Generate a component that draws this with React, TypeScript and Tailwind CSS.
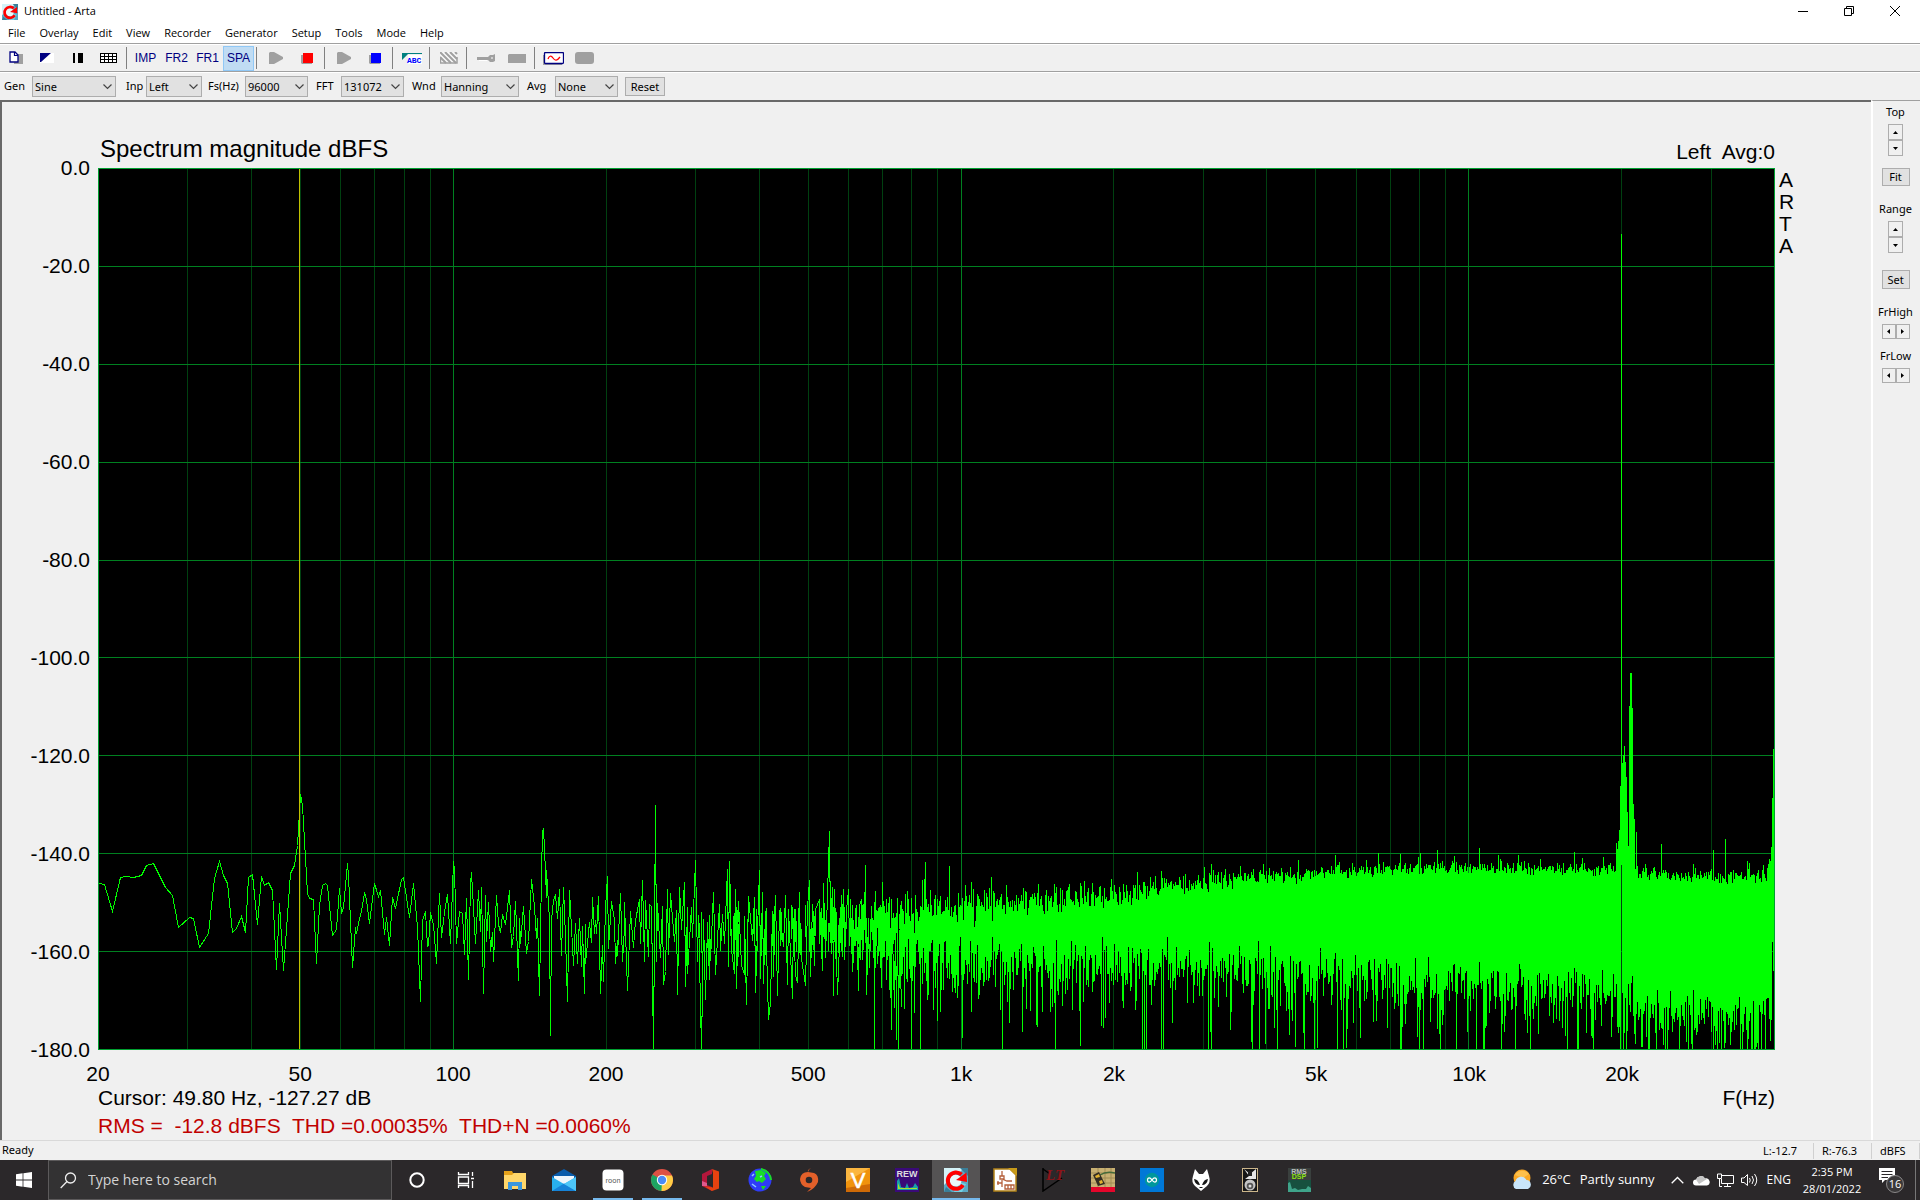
import type { ReactNode } from "react";

const menus = ["File", "Overlay", "Edit", "View", "Recorder", "Generator", "Setup", "Tools", "Mode", "Help"];

const dbTicks = ["0.0", "-20.0", "-40.0", "-60.0", "-80.0", "-100.0", "-120.0", "-140.0", "-160.0", "-180.0"];

const freqTicks = [
    { hz: 20, label: "20" },
    { hz: 50, label: "50" },
    { hz: 100, label: "100" },
    { hz: 200, label: "200" },
    { hz: 500, label: "500" },
    { hz: 1000, label: "1k" },
    { hz: 2000, label: "2k" },
    { hz: 5000, label: "5k" },
    { hz: 10000, label: "10k" },
    { hz: 20000, label: "20k" },
];

// plot units
const PLOT_W = 1677;
const PLOT_H = 882;
const F_MIN = 20;
const F_MAX = 40000;
const BASE_Y = 612;

function freqRatio(hz: number) {
    return Math.log10(hz / F_MIN) / Math.log10(F_MAX / F_MIN);
}

function freqX(hz: number) {
    return Math.round(freqRatio(hz) * (PLOT_W - 1)) + 0.5;
}

// low frequency bins, x,y pairs measured from BASE_Y
const lowBins =
    "0,103 6,104 14,131 22,97 28,96 35,97 43,95 48,85 55,83 67,107 74,115 80,147 91,137 95,138 101,167 110,153 116,98 121,81 125,95 129,103 134,152 138,148 143,136 147,152 150,97 154,94 159,144 163,96 166,105 170,102 174,110 178,189 181,123 185,190 192,93 196,85 199,65 202,14 204,25 206,60 209,113 211,118 215,119 218,183 221,125 224,105 227,103 229,105 234,155 238,149 241,108 243,133 245,127 249,83 250,95 254,187 257,147 258,153 261,138 263,131 266,112 268,119 271,143 276,103 280,116 282,110 286,154 288,137 291,165 294,117 297,128 303,99 305,97 311,137 315,103 319,147 322,221 324,140 327,131 329,166 330,165 332,132 335,144 338,183 341,113 343,157 346,132 349,114 352,163 355,81 356,89 358,163 361,131 364,133 366,174 368,118 370,199 372,103 373,92 377,163 380,110 382,151 383,107 385,213 387,115 388,161 390,122 392,171 394,152 395,181 398,115 400,144 402,152 404,134 407,144 411,110 413,167 415,156 417,121 420,200 421,138 422,163 425,126 428,173 430,161 433,99 436,126 438,158 439,138 441,215 443,93 444,52 445,48 446,68 448,117 448,90 451,140 452,255 453,140 455,120 457,114 459,138 461,109 463,175 465,107 467,157 469,221 471,110 475,185 477,143 479,183 481,138 483,186 484,146 486,213 487,144 487,183 491,142 493,162 494,117 496,153 497,140 498,153 500,116 502,213 504,165 505,201 507,127 509,96 510,168 513,121 516,140 517,183 519,160 519,175 522,113 524,181 526,147 526,122 529,210 532,131 535,167 537,140 541,119 542,163 544,100 546,181 547,120 550,176 551,124 553,126 555,269 557,25 558,181 559,123 562,177 564,126 565,204 567,191 569,109 570,174 572,113 576,161 578,130 579,214 581,107 583,149 586,102 587,206 589,127 589,193 593,127 594,157 597,80 599,181 600,135 603,269 605,139 607,219 609,144 611,199 611,135 612,180 615,112 617,194 621,124 622,170 624,134 626,163 629,89 630,186 631,81 633,170 636,193 637,109 638,208 640,121 643,185 646,194 646,136 648,224 650,116 654,160 656,117 657,212 661,90 662,198 664,112 665,203 667,131 670,239 672,222 674,131 675,196 677,115 679,215 681,130 685,166 687,115 689,204 690,129 694,218 695,138 697,195 699,202 701,112 702,171 707,205 709,127 711,100 712,196 714,124 716,185 717,129 721,119 724,190 725,103 727,177 731,51 732,150 734,107 735,215 736,109 739,214 743,115 743,170 745,109 746,179 748,130 750,109 751,165 752,119 754,191 757,140 758,125 760,210 761,125 763,119 764,179 766,140 767,85 768,214 770,138 771,187 773,126 775,170 776,122 776,269 777,111 779,183 781,127 783,207 784,102 786,175 788,119 788,199 790,123 791,209 791,117 793,249 793,119 796,227 797,137 798,259 799,118 800,269 801,150 803,227";

const highPeaks: Record<number, number> = {
    824: 100, 827: 82, 826: 99, 851: 86, 867: 105, 873: 102, 893: 97, 940: 104, 956: 104, 1039: 92, 1052: 97,
    1087: 94, 1106: 87, 1113: 84, 1115: 90, 1142: 86, 1200: 80, 1237: 75, 1280: 73, 1302: 74, 1339: 70, 1322: 73,
    1356: 76, 1381: 68, 1420: 75, 1476: 72, 1484: 78, 1505: 77, 1518: 63, 1519: 69, 1520: 61, 1521: 50, 1522: 6,
    1523: -546, 1524: -17, 1525: -25, 1526: -34, 1527: -18, 1528: -3, 1529: 32, 1530: 66, 1531: -74, 1532: -107,
    1533: -107, 1534: -72, 1535: 24, 1536: 39, 1538: 52, 1563: 64, 1595: 84, 1615: 70, 1627: 59, 1649: 81,
    1651: 83, 1665: 85, 1669: 88, 1670: 84, 1671: 79, 1672: 81, 1673: 67, 1674: 18, 1675: -31,
};

// smoothed envelope of the noise floor: x, upper edge, lower edge
const envelope = [
    [803, 130, 172],
    [862, 128, 172],
    [950, 119, 172],
    [1020, 112, 174],
    [1100, 103, 176],
    [1180, 95, 178],
    [1232, 92, 184],
    [1330, 88, 192],
    [1420, 88, 198],
    [1500, 90, 202],
    [1560, 94, 218],
    [1620, 97, 228],
    [1677, 97, 222],
];

function envelopeAt(x: number) {
    let i = 0;
    while (i < envelope.length - 2 && envelope[i + 1][0] < x) i++;
    const [x0, t0, b0] = envelope[i];
    const [x1, t1, b1] = envelope[i + 1];
    const k = (x - x0) / (x1 - x0);
    return [t0 + (t1 - t0) * k, b0 + (b1 - b0) * k];
}

function buildNoise() {
    let seed = 20220128;
    const rand = () => {
        seed = (seed * 1664525 + 1013904223) % 4294967296;
        return seed / 4294967296;
    };
    let d = "";
    // bins start to share columns here
    for (let x = 600; x < 803; x++) {
        if (rand() < (x - 560) / 260) {
            d += `M${x + 0.5} ${Math.round(124 + rand() * 26)}V${Math.round(148 + rand() * 32)}`;
        }
    }
    for (let x = 803; x < 1676; x++) {
        const [top, bottom] = envelopeAt(x);
        const spread = x < 900 ? 24 : x < 1050 ? 17 : x < 1200 ? 12 : 8;
        let y0 = top + (rand() + rand() - 1) * spread - (rand() > 0.9 ? rand() * 8 : 0);
        let y1 = bottom + (rand() - 0.5) * 38 - Math.log(1 - rand()) * 24;
        if (x in highPeaks) y0 = highPeaks[x];
        if (x === 1523) y1 = 85;
        if (x === 1674) y1 = 162;
        if (x === 1675) y1 = 191;
        y1 = Math.min(y1, 269);
        d += `M${x + 0.5} ${Math.round(y0)}V${Math.round(y1)}`;
    }
    return d;
}

const noisePath = buildNoise();

const gridFreqs: number[] = [];
for (const decade of [10, 100, 1000, 10000]) {
    for (let n = 1; n < 10; n++) {
        const hz = n * decade;
        if (hz > F_MIN && hz < F_MAX) gridFreqs.push(hz);
    }
}

function Plot() {
    return (
        <svg
            viewBox={`0 0 ${PLOT_W} ${PLOT_H}`}
            preserveAspectRatio="none"
            shapeRendering="crispEdges"
            className="block h-full w-full bg-black"
            role="img"
            aria-label="Spectrum magnitude"
        >
            {gridFreqs
                .filter((hz) => ![100, 1000, 10000].includes(hz))
                .map((hz) => (
                    <line key={hz} x1={freqX(hz)} x2={freqX(hz)} y1={0} y2={PLOT_H} stroke="#004010" />
                ))}
            {[100, 1000, 10000].map((hz) => (
                <line key={hz} x1={freqX(hz)} x2={freqX(hz)} y1={0} y2={PLOT_H} stroke="#008020" />
            ))}
            {dbTicks.map((t, i) => {
                const y = Math.round((i * (PLOT_H - 1)) / 9) + 0.5;
                return <line key={t} x1={0} x2={PLOT_W} y1={y} y2={y} stroke="#008020" />;
            })}
            <g transform={`translate(0 ${BASE_Y})`} fill="none" stroke="#00ff00">
                <polyline points={lowBins} transform="translate(0.5 0.5)" />
                <path d={noisePath} />
            </g>
            <line x1={201.5} x2={201.5} y1={0} y2={PLOT_H} stroke="#c0c000" />
            <rect x={0.5} y={0.5} width={PLOT_W - 1} height={PLOT_H - 1} fill="none" stroke="#00a030" />
        </svg>
    );
}

function Chart() {
    return (
        <div className="grid min-h-0 min-w-0 flex-1 grid-cols-[96px_minmax(0,1fr)_96px] grid-rows-[66px_minmax(0,1fr)_auto] border-l-2 border-t-2 border-[#696969] bg-[#f0f0f0] font-['Liberation_Sans',Arial,sans-serif] text-[21px] leading-6 text-black">
            <div />
            <div className="flex items-end justify-between pb-1">
                <h1 className="pl-0.5 text-2xl leading-[30px]">Spectrum magnitude dBFS</h1>
                <span className="whitespace-pre">Left  Avg:0</span>
            </div>
            <div />

            <div className="-my-3 flex flex-col justify-between pr-2 text-right">
                {dbTicks.map((t) => (
                    <span key={t}>{t}</span>
                ))}
            </div>
            <Plot />
            <div className="flex flex-col pt-px pl-1 leading-[22px]">
                <span>A</span>
                <span>R</span>
                <span>T</span>
                <span>A</span>
            </div>

            <div />
            <div className="pt-3">
                <svg className="block h-6 w-full overflow-visible" aria-label="Frequency axis">
                    {freqTicks.map((t) => (
                        <text key={t.hz} x={`${freqRatio(t.hz) * 100}%`} y={19} textAnchor="middle">
                            {t.label}
                        </text>
                    ))}
                </svg>
                <div className="flex justify-between">
                    <span>Cursor: 49.80 Hz, -127.27 dB</span>
                    <span>F(Hz)</span>
                </div>
                <p className="pt-1 pb-0.5 whitespace-pre text-[#c00000]">
                    RMS =  -12.8 dBFS  THD =0.00035%  THD+N =0.0060%
                </p>
            </div>
            <div />
        </div>
    );
}

function ToolButton({ label, active, children }: { label: string; active?: boolean; children: ReactNode }) {
    return (
        <button
            aria-label={label}
            className={
                active
                    ? "flex h-[25px] w-[31px] items-center justify-center border border-[#90c8f6] bg-[#c0dcf3]"
                    : "flex h-[25px] w-[31px] items-center justify-center"
            }
        >
            {children}
        </button>
    );
}

function Sep() {
    return <div className="mr-[3px] ml-0.5 h-[22px] w-px bg-[#808080]" />;
}

function Toolbar() {
    return (
        <div className="flex h-7 items-center border-t border-b border-t-white border-b-[#a0a0a0] bg-[#f0f0f0] font-['Liberation_Sans',Arial,sans-serif] text-xs text-[#000080]">
            <ToolButton label="Copy">
                <svg width="14" height="14" viewBox="0 0 14 14">
                    <path d="M5 3H14V13H5z" fill="#a0a0a0" />
                    <path d="M1 1H6L9 4V11H1z" fill="#fff" stroke="#000080" strokeWidth="1.3" />
                    <path d="M5.500 1V4.500H9" fill="none" stroke="#000080" strokeWidth="1.200" />
                </svg>
            </ToolButton>
            <ToolButton label="Black and white">
                <svg width="14" height="10" viewBox="0 0 14 10">
                    <path d="M0 0H14V10H0z" fill="#fff" />
                    <path d="M0 0H11L1 9H0z" fill="#000080" />
                </svg>
            </ToolButton>
            <ToolButton label="Line width">
                <svg width="10" height="10" viewBox="0 0 10 10">
                    <path d="M0 0H2V10H0zM5 0H10V10H5z" fill="#000" />
                </svg>
            </ToolButton>
            <ToolButton label="Grid">
                <svg width="17" height="10" viewBox="0 0 17 10" shapeRendering="crispEdges">
                    <path
                        d="M.5 .5H16.500V9.500H.5zM0 3.500H17M0 6.500H17M4.500 0V10M8.500 0V10M12.500 0V10"
                        fill="#fff"
                        stroke="#000"
                    />
                </svg>
            </ToolButton>
            <Sep />
            <ToolButton label="Impulse response">IMP</ToolButton>
            <ToolButton label="Frequency response 2">FR2</ToolButton>
            <ToolButton label="Frequency response 1">FR1</ToolButton>
            <ToolButton label="Spectrum" active>
                SPA
            </ToolButton>
            <Sep />
            <ToolButton label="Start">
                <svg width="14" height="12" viewBox="0 0 14 12">
                    <path d="M0 1L1 0H5L14 5V7L5 12H0z" fill="#a0a0a0" />
                </svg>
            </ToolButton>
            <ToolButton label="Stop">
                <svg width="12" height="11" viewBox="0 0 12 11">
                    <path d="M0 2H11V11H1L0 10z" fill="#a0a0a0" />
                    <path d="M2 0H12V10H2z" fill="#ff0000" />
                </svg>
            </ToolButton>
            <Sep />
            <ToolButton label="Generator start">
                <svg width="14" height="12" viewBox="0 0 14 12">
                    <path d="M0 1L1 0H5L14 5V7L5 12H0z" fill="#a0a0a0" />
                </svg>
            </ToolButton>
            <ToolButton label="Generator stop">
                <svg width="12" height="11" viewBox="0 0 12 11">
                    <path d="M0 2H11V11H1L0 10z" fill="#a0a0a0" />
                    <path d="M2 0H12V10H2z" fill="#0000ff" />
                </svg>
            </ToolButton>
            <Sep />
            <ToolButton label="Weighting">
                <svg width="20" height="12" viewBox="0 0 20 12">
                    <path d="M0 1H20V2H6L0 8z" fill="#008080" />
                    <path d="M6 3H20V12H6z" fill="#fff" />
                    <text x="5" y="11" fontSize="8" fill="#0000ff" className="font-['Liberation_Mono',monospace] font-bold">
                        ABC
                    </text>
                </svg>
            </ToolButton>
            <Sep />
            <ToolButton label="Overlay">
                <svg width="18" height="12" viewBox="0 0 18 12">
                    <path d="M0 0H17V11H0z" fill="#f8f8f8" />
                    <path d="M0 0L11 11M5 0L16 11M10 0L17 7M0 5L6 11M15 0L17 2" stroke="#a0a0a0" strokeWidth="2" />
                    <path d="M.5 5V11H17V5" fill="none" stroke="#a0a0a0" strokeWidth="1.500" />
                </svg>
            </ToolButton>
            <Sep />
            <ToolButton label="Calibrate">
                <svg width="18" height="9" viewBox="0 0 18 9">
                    <path d="M0 3H11L13 1H16L18 0V7L16 8H13L11 6H0z" fill="#a0a0a0" />
                    <path d="M2 6.500H10M14 4H16" stroke="#fff" />
                </svg>
            </ToolButton>
            <ToolButton label="Level">
                <svg width="18" height="9" viewBox="0 0 18 9">
                    <path d="M1 0H18V9H0V1z" fill="#a0a0a0" />
                </svg>
            </ToolButton>
            <Sep />
            <ToolButton label="Signal generator">
                <svg width="21" height="13" viewBox="0 0 21 13">
                    <path d="M1 3V12H19" fill="none" stroke="#a0a0a0" strokeWidth="2" />
                    <rect x="1.500" y=".5" width="19" height="11" rx="1" fill="#fff" stroke="#000080" strokeWidth="1.300" />
                    <path d="M5 7C6 4 8 3 10 6S14 9 17 5" fill="none" stroke="#ff0000" strokeWidth="1.300" />
                </svg>
            </ToolButton>
            <ToolButton label="Record">
                <svg width="19" height="12" viewBox="0 0 19 12">
                    <rect width="19" height="12" rx="3" fill="#a0a0a0" />
                </svg>
            </ToolButton>
        </div>
    );
}

function Combo({ id, label, value, labelClass, boxClass }: { id: string; label: string; value: string; labelClass: string; boxClass: string }) {
    return (
        <div className="flex items-center">
            <label htmlFor={id} className={labelClass}>
                {label}
            </label>
            <div className={boxClass}>
                <select id={id} className="h-full w-full appearance-none border border-[#adadad] bg-[#e1e1e1] pl-0.5 leading-4 text-black">
                    <option>{value}</option>
                </select>
                <svg width="9" height="6" viewBox="0 0 9 6" className="pointer-events-none absolute top-2 right-1">
                    <path d="M.5 .5L4.500 4.500L8.500 .5" fill="none" stroke="#444" strokeWidth="1.200" />
                </svg>
            </div>
        </div>
    );
}

function SettingsBar() {
    return (
        <div className="flex h-7 items-center border-t border-t-white bg-[#f0f0f0] pl-1 font-['Noto_Sans',sans-serif] text-[11px] text-black">
            <Combo id="gen" label="Gen" value="Sine" labelClass="w-7" boxClass="relative h-[21px] w-[84px]" />
            <Combo id="inp" label="Inp" value="Left" labelClass="ml-[10px] w-5" boxClass="relative h-[21px] w-14" />
            <Combo id="fs" label="Fs(Hz)" value="96000" labelClass="ml-1.5 w-[37px]" boxClass="relative h-[21px] w-[63px]" />
            <Combo id="fft" label="FFT" value="131072" labelClass="ml-2 w-[25px]" boxClass="relative h-[21px] w-[63px]" />
            <Combo id="wnd" label="Wnd" value="Hanning" labelClass="ml-2 w-[29px]" boxClass="relative h-[21px] w-[78px]" />
            <Combo id="avg" label="Avg" value="None" labelClass="ml-2 w-7" boxClass="relative h-[21px] w-[63px]" />
            <button className="ml-[7px] h-[19px] w-10 border border-[#adadad] bg-[#e1e1e1] leading-4">Reset</button>
        </div>
    );
}

function VSpin({ name }: { name: string }) {
    return (
        <div className="flex w-[15px] flex-col">
            <button aria-label={`${name} up`} className="flex h-4 items-center justify-center border border-[#adadad] bg-[#f0f0f0]">
                <svg width="5" height="3" viewBox="0 0 5 3">
                    <path d="M0 3L2.500 0L5 3z" />
                </svg>
            </button>
            <button aria-label={`${name} down`} className="flex h-4 items-center justify-center border border-[#adadad] bg-[#f0f0f0]">
                <svg width="5" height="3" viewBox="0 0 5 3">
                    <path d="M0 0L2.500 3L5 0z" />
                </svg>
            </button>
        </div>
    );
}

function HSpin({ name }: { name: string }) {
    return (
        <div className="flex h-[15px]">
            <button aria-label={`${name} left`} className="flex w-3.5 items-center justify-center border border-[#adadad] bg-[#f0f0f0]">
                <svg width="3" height="5" viewBox="0 0 3 5">
                    <path d="M3 0L0 2.500L3 5z" />
                </svg>
            </button>
            <button aria-label={`${name} right`} className="flex w-3.5 items-center justify-center border border-[#adadad] bg-[#f0f0f0]">
                <svg width="3" height="5" viewBox="0 0 3 5">
                    <path d="M0 0L3 2.500L0 5z" />
                </svg>
            </button>
        </div>
    );
}

function SidePanel() {
    return (
        <aside className="flex w-[49px] shrink-0 flex-col items-center border-t border-l-2 border-t-[#a0a0a0] border-l-white bg-[#f0f0f0] pt-1 pr-0.5 font-['Noto_Sans',sans-serif] text-[11px] leading-[14px] text-black">
            <span>Top</span>
            <div className="mt-[5px]">
                <VSpin name="Top" />
            </div>
            <button className="mt-3 h-[18px] w-7 border border-[#adadad] bg-[#e1e1e1]">Fit</button>
            <span className="mt-4">Range</span>
            <div className="mt-[5px]">
                <VSpin name="Range" />
            </div>
            <button className="mt-[17px] h-[19px] w-7 border border-[#adadad] bg-[#e1e1e1] leading-4">Set</button>
            <span className="mt-4">FrHigh</span>
            <div className="mt-[5px]">
                <HSpin name="FrHigh" />
            </div>
            <span className="mt-[10px]">FrLow</span>
            <div className="mt-[5px]">
                <HSpin name="FrLow" />
            </div>
        </aside>
    );
}

function ArtaIcon({ size }: { size: number }) {
    return (
        <svg width={size} height={size} viewBox="0 0 24 24">
            <path d="M0 0H24V24H0z" fill="#5ba9c4" />
            <path d="M0 0H20L16 4L6 6L3 14L0 17z" fill="#d4f2f8" />
            <path d="M16 0H24V8zM2 19L8 24H0z" fill="#3a7e98" />
            <path d="M14 14L22 16L18 24H10z" fill="#74d2e6" />
            <circle cx="11.500" cy="12.500" r="6" fill="#e9f9fb" />
            <path d="M19 17A8.200 8.200 0 1 1 17.500 6.500" fill="none" stroke="#ff0000" strokeWidth="4" />
            <path d="M12 12L22.500 4.500L23 14z" fill="#ff0000" />
        </svg>
    );
}

const taskIcons: { name: string; state?: "open" | "active"; icon: ReactNode }[] = [
    {
        name: "Cortana",
        icon: <circle cx="12" cy="12" r="6.700" fill="none" stroke="#fff" strokeWidth="2" />,
    },
    {
        name: "Task view",
        icon: (
            <path
                d="M4.500 4V6.500H14.500V4M4.500 20V17.500H14.500V20M4.500 9H14.500V15.500H4.500zM18.500 4V8M18.500 13V20M17 10.500H20"
                fill="none"
                stroke="#fff"
                strokeWidth="1.300"
            />
        ),
    },
    {
        name: "File Explorer",
        icon: (
            <>
                <path d="M1 3H9L10 5H22V21H1z" fill="#e5a21a" />
                <path d="M1 7H9L11 5H23V21H1z" fill="#ffd76a" />
                <path d="M5 14H19V22H15V18H9V22H5z" fill="#3a96dd" />
            </>
        ),
    },
    {
        name: "Mail",
        icon: (
            <>
                <path d="M0 8L12 1L24 8V14H0z" fill="#0a5cab" />
                <path d="M2 8H22V16H2z" fill="#eef5fb" />
                <path d="M0 9L12 16L24 9V23H0z" fill="#28b0ee" />
                <path d="M0 23L12 15.500L24 23z" fill="#1683d8" />
                <path d="M24 9V23L12 16z" fill="#4dc6f8" />
            </>
        ),
    },
    {
        name: "Roon",
        state: "open",
        icon: (
            <>
                <rect x="1.500" y="1.500" width="21" height="21" rx="4" fill="#fff" />
                <text x="12" y="14.500" textAnchor="middle" fontSize="7" fill="#555" className="font-['Inter',sans-serif]">
                    roon
                </text>
            </>
        ),
    },
    {
        name: "Chrome",
        state: "open",
        icon: (
            <>
                <circle cx="12" cy="12" r="11" fill="#dd5144" />
                <path d="M12 12L2.500 6.500A11 11 0 0 0 11.500 23L17 14z" fill="#1da462" />
                <path d="M12 12L11.500 23A11 11 0 0 0 22 7.500H12z" fill="#ffcd46" />
                <circle cx="12" cy="12" r="5.200" fill="#fff" />
                <circle cx="12" cy="12" r="4.200" fill="#4c8bf5" />
            </>
        ),
    },
    {
        name: "Office",
        icon: (
            <>
                <path d="M3 6L13 1V6L8 8V17L13 19V23L3 18z" fill="#b5173c" />
                <path d="M13 1L20 3.500V20.500L13 23L5 18L14 19.500V5z" fill="#e74210" />
                <path d="M3 13L8 15V18L3 18z" fill="#e05a8e" />
            </>
        ),
    },
    {
        name: "Globe",
        icon: (
            <>
                <circle cx="12" cy="12" r="11.500" fill="#2f3cf6" />
                <path d="M7 3L13 2L18 5L16 8L18 11L14 15L11 13L9 14L6 11L8 8z" fill="#18dd25" />
                <path d="M13 18L18 18L15 22z" fill="#18dd25" />
                <path d="M13 1Q22 3 23 12" fill="none" stroke="#18dd25" strokeWidth="2" />
                <path d="M4 8L6 6M12 9L14 8M4 16L8 19" stroke="#8ec8ff" strokeWidth="1.500" />
            </>
        ),
    },
    {
        name: "Origin",
        icon: (
            <>
                <path d="M14 0Q10 2 11 4Q4 4 3 11Q3 16 8 19L14 20Q12 22 10 24Q18 21 21 14Q22 7 17 5L11 4Q12 1 14 0z" fill="#e3602a" />
                <circle cx="12" cy="12" r="3.300" fill="#2b282a" />
            </>
        ),
    },
    {
        name: "Voltage",
        icon: (
            <>
                <path d="M0 0H24V24H0z" fill="#f0930d" />
                <path d="M0 0H24L0 14z" fill="#fbb640" />
                <path d="M0 20L24 16V24H0z" fill="#cf6a06" />
                <text x="12" y="20" textAnchor="middle" fontSize="22" fill="#fff" stroke="#fff" strokeWidth=".6" className="font-['Liberation_Sans',sans-serif]">
                    V
                </text>
            </>
        ),
    },
    {
        name: "REW",
        icon: (
            <>
                <path d="M0 0H24V24H0z" fill="#3a0a78" />
                <path d="M2 22V13L4 10L6 19L10 20L12 15L14 20L18 19L20 15L23 19V22z" fill="#16a1a8" />
                <path d="M3 21V15L5 20H22V21z" fill="#a8e02c" />
                <text x="12" y="9" textAnchor="middle" fontSize="9" fill="#ddd" className="font-['Liberation_Sans',sans-serif] font-bold">
                    REW
                </text>
            </>
        ),
    },
    { name: "Arta", state: "active", icon: null },
    {
        name: "Schematic",
        icon: (
            <>
                <path d="M1 1H17L23 7V23H1z" fill="#fff" stroke="#b38319" strokeWidth="1.500" />
                <path d="M15 0H24V8z" fill="#c79a1a" />
                <path d="M9 3V8M9 12V19M4 15H9M9 11L14 13H19M7 8H11V11H7zM12 17H21V21H12zM15 17V21M18 17V21M5 13V17" fill="none" stroke="#b5603c" strokeWidth="1.300" />
            </>
        ),
    },
    {
        name: "LTspice",
        icon: (
            <>
                <path d="M1 0V23L20 10" fill="none" stroke="#000" strokeWidth="1.500" />
                <path d="M1 1L8 6" stroke="#000" strokeWidth="1.500" />
                <text x="4" y="12" fontSize="15" fill="#8e1217" className="font-['Liberation_Serif',serif] font-bold italic">
                    LT
                </text>
            </>
        ),
    },
    {
        name: "Multimeter",
        icon: (
            <>
                <path d="M0 0H24V19H0z" fill="#c8b072" />
                <path d="M0 5H24M0 10H24M0 15H24M7 0V19M14 0V19M20 0V19" stroke="#a08c54" />
                <path d="M9 7Q15 3 24 5" fill="none" stroke="#456b3a" strokeWidth="1.500" />
                <path d="M2 7L8 4L14 16L7 18z" fill="#332d22" />
                <path d="M4 8L8 6L9 9L5 10zM8 13L11 12L12 15L9 16z" fill="#e3b331" />
                <path d="M0 19H24V24H0z" fill="#e5062b" />
            </>
        ),
    },
    {
        name: "Arduino",
        icon: (
            <>
                <path d="M0 0H24V24H0z" fill="#0078d7" />
                <circle cx="12" cy="12" r="7.200" fill="#00979c" />
                <path d="M12 12C10 9 7.500 9.500 7.500 12S10 15 12 12S16.500 9.500 16.500 12S14 15 12 12z" fill="none" stroke="#fff" strokeWidth="1.300" />
            </>
        ),
    },
    {
        name: "foobar2000",
        icon: (
            <>
                <path d="M6 1L10 6H14L18 1L20 8Q22 14 18 18L12 23L6 18Q2 14 4 8z" fill="#fff" />
                <path d="M5 11Q9 11 11 17Q6 17 5 11zM19 11Q15 11 13 17Q18 17 19 11z" fill="#161616" />
                <path d="M10.500 19.500H13.500" stroke="#161616" />
            </>
        ),
    },
    {
        name: "Speaker",
        icon: (
            <>
                <path d="M4 0H20V24H4z" fill="#cbb58a" />
                <path d="M5 1H19V23H5z" fill="#161616" />
                <path d="M6 1L12 6L18 1V11H7L11 8z" fill="#e6e6e6" />
                <path d="M10 3H14V8H10z" fill="#222" />
                <circle cx="12" cy="17" r="5.500" fill="#c4c4c4" />
                <circle cx="12" cy="18" r="3.300" fill="#555" />
                <circle cx="12" cy="18" r="1.500" fill="#ddd" />
            </>
        ),
    },
    {
        name: "RMS DSP",
        icon: (
            <>
                <path d="M1 0H24V24H1z" fill="#3a403e" />
                <path d="M1 12H24V24H1z" fill="#17503f" />
                <path d="M1 24V15L3 14L5 21L8 20L11 22L15 21L19 21L21 18L24 20V24z" fill="#3fa48a" />
                <text x="12" y="6" textAnchor="middle" fontSize="7" fill="#b9bebd" className="font-['Liberation_Sans',sans-serif] font-bold">
                    RMS
                </text>
                <text x="12" y="11" textAnchor="middle" fontSize="7" fill="#8be614" className="font-['Liberation_Sans',sans-serif] font-bold">
                    DSP
                </text>
            </>
        ),
    },
];

function Taskbar() {
    return (
        <footer className="flex h-10 shrink-0 items-stretch bg-[#2b282a] font-['Open_Sans',sans-serif] text-white">
            <button aria-label="Start" className="flex w-12 items-center justify-center">
                <svg width="16" height="16" viewBox="0 0 16 16">
                    <path d="M0 2.200L6.600 1.300V7.600H0zM7.400 1.200L16 0V7.600H7.400zM0 8.400H6.600V14.700L0 13.800zM7.400 8.400H16V16L7.400 14.800z" fill="#fff" />
                </svg>
            </button>
            <label className="flex w-[344px] items-center gap-[11px] border border-[#5c5a5b] bg-[#333233] pl-[11px]">
                <svg width="17" height="17" viewBox="0 0 17 17">
                    <circle cx="10.500" cy="6" r="5" fill="none" stroke="#eee" strokeWidth="1.300" />
                    <path d="M7 9.500L.7 16" stroke="#eee" strokeWidth="1.300" />
                </svg>
                <input
                    type="text"
                    placeholder="Type here to search"
                    className="min-w-0 flex-1 bg-transparent text-sm outline-none placeholder:text-[#d4d4d4]"
                />
            </label>
            <div className="ml-px flex gap-px">
                {taskIcons.map((t) => (
                    <button
                        key={t.name}
                        aria-label={t.name}
                        className={
                            t.state === "active"
                                ? "flex w-12 flex-col items-center justify-between bg-[#555354] pt-2"
                                : "flex w-12 flex-col items-center justify-between pt-2"
                        }
                    >
                        {t.icon ? (
                            <svg width="24" height="24" viewBox="0 0 24 24">
                                {t.icon}
                            </svg>
                        ) : (
                            <ArtaIcon size={24} />
                        )}
                        {t.state === "active" && <span className="h-0.5 w-full bg-[#76b9ed]" />}
                        {t.state === "open" && <span className="h-0.5 w-10 bg-[#76b9ed]" />}
                    </button>
                ))}
            </div>
            <div className="ml-auto flex items-center">
                <button className="flex items-center gap-[9px] text-[13px]">
                    <svg width="22" height="22" viewBox="0 0 22 22">
                        <circle cx="11" cy="9" r="8.500" fill="#f9a825" />
                        <path d="M4 6A8.500 8.500 0 0 1 18 5L12 9z" fill="#fdc04b" />
                        <path d="M5 20A4.500 4.500 0 0 1 4.500 12A6 6 0 0 1 15.500 11A4.700 4.700 0 0 1 17 20z" fill="#c9e6fa" />
                    </svg>
                    <span>26°C</span>
                    <span>Partly sunny</span>
                </button>
                <button aria-label="Show hidden icons" className="ml-4">
                    <svg width="13" height="8" viewBox="0 0 13 8">
                        <path d="M.7 7.300L6.500 1.500L12.300 7.300" fill="none" stroke="#fff" strokeWidth="1.300" />
                    </svg>
                </button>
                <svg width="17" height="11" viewBox="0 0 17 11" className="ml-[9px]">
                    <path d="M3 10.500A3 3 0 0 1 3 4.500A5 5 0 0 1 12 3.500A3.600 3.600 0 0 1 14 10.500z" fill="#fff" />
                    <path d="M3 4.500A5 5 0 0 1 12 3.500L14 4L6 9z" fill="#c4c4c4" />
                </svg>
                <svg width="17" height="15" viewBox="0 0 17 15" className="ml-[7px]">
                    <path d="M5 2.500H16.500V10.500H4.500V6M10.500 10.500V13.500M7 13.500H14M.5 1H4.500V5.500H.5zM2.500 6V13.500H5" fill="none" stroke="#fff" />
                </svg>
                <svg width="17" height="14" viewBox="0 0 17 14" className="ml-[7px]">
                    <path d="M.5 5H3L6.500 1.500V12.500L3 9.500H.5z" fill="none" stroke="#fff" />
                    <path d="M8.500 5Q10 7 8.500 9.500M11 3Q14 7 11 11M13.500 1Q18 7 13.500 13" fill="none" stroke="#fff" />
                </svg>
                <span className="ml-[9px] text-xs">ENG</span>
                <div className="ml-[11px] w-[60px] text-center text-[11px] leading-[17px]">
                    <p>2:35 PM</p>
                    <p>28/01/2022</p>
                </div>
                <button aria-label="Notifications" className="ml-[17px]">
                    <svg width="26" height="26" viewBox="0 0 26 26">
                        <path d="M0 1H16V13H6L3 16V13H0z" fill="#fff" />
                        <path d="M2.500 4.500H13.500M2.500 7.500H13.500M2.500 10.500H9" stroke="#2b282a" />
                        <circle cx="16" cy="17" r="8.500" fill="#3a3839" stroke="#8a8889" />
                        <text x="16" y="21" textAnchor="middle" fontSize="11" fill="#fff">
                            16
                        </text>
                    </svg>
                </button>
                <div className="mr-1 ml-2.5 h-10 w-px bg-[#777]" />
            </div>
        </footer>
    );
}

export default function App() {
    return (
        <div className="flex h-screen flex-col overflow-hidden bg-[#f0f0f0]">
            <header className="shrink-0 border-b border-[#a0a0a0] bg-white font-['Open_Sans',sans-serif] text-[11px] text-black">
                <div className="flex h-[22px] items-center justify-between">
                    <div className="flex items-center gap-1.5 pt-px pl-0.5">
                        <ArtaIcon size={16} />
                        <span>Untitled - Arta</span>
                    </div>
                    <div className="flex pr-0.5">
                        <button aria-label="Minimize" className="flex h-5 w-[46px] items-center justify-center">
                            <svg width="10" height="10" viewBox="0 0 10 10">
                                <path d="M0 5.500H10" stroke="#000" />
                            </svg>
                        </button>
                        <button aria-label="Restore" className="flex h-5 w-[46px] items-center justify-center">
                            <svg width="10" height="10" viewBox="0 0 10 10">
                                <path d="M.5 2.500H7.500V9.500H.5zM2.500 2V.5H9.500V7.500H8" fill="none" stroke="#000" />
                            </svg>
                        </button>
                        <button aria-label="Close" className="flex h-5 w-[46px] items-center justify-center">
                            <svg width="10" height="10" viewBox="0 0 10 10">
                                <path d="M0 0L10 10M10 0L0 10" stroke="#000" />
                            </svg>
                        </button>
                    </div>
                </div>
                <nav className="flex h-[21px] items-center pt-px pl-px">
                    {menus.map((m) => (
                        <button key={m} className="px-[7px]">
                            {m}
                        </button>
                    ))}
                </nav>
            </header>
            <Toolbar />
            <SettingsBar />
            <main className="flex min-h-0 flex-1">
                <Chart />
                <SidePanel />
            </main>
            <div className="flex h-5 shrink-0 items-center border-t border-[#d9d9d9] bg-[#f0f0f0] pl-0.5 font-['Noto_Sans',sans-serif] text-[11px] text-black">
                <span>Ready</span>
                <div className="ml-auto flex h-4 items-center leading-4">
                    <span className="w-[51px] border-r border-[#d0d0d0]">L:-12.7</span>
                    <span className="w-[58px] border-r border-[#d0d0d0] pl-2">R:-76.3</span>
                    <span className="w-12 border-r border-[#d0d0d0] pl-2">dBFS</span>
                </div>
            </div>
            <Taskbar />
        </div>
    );
}
